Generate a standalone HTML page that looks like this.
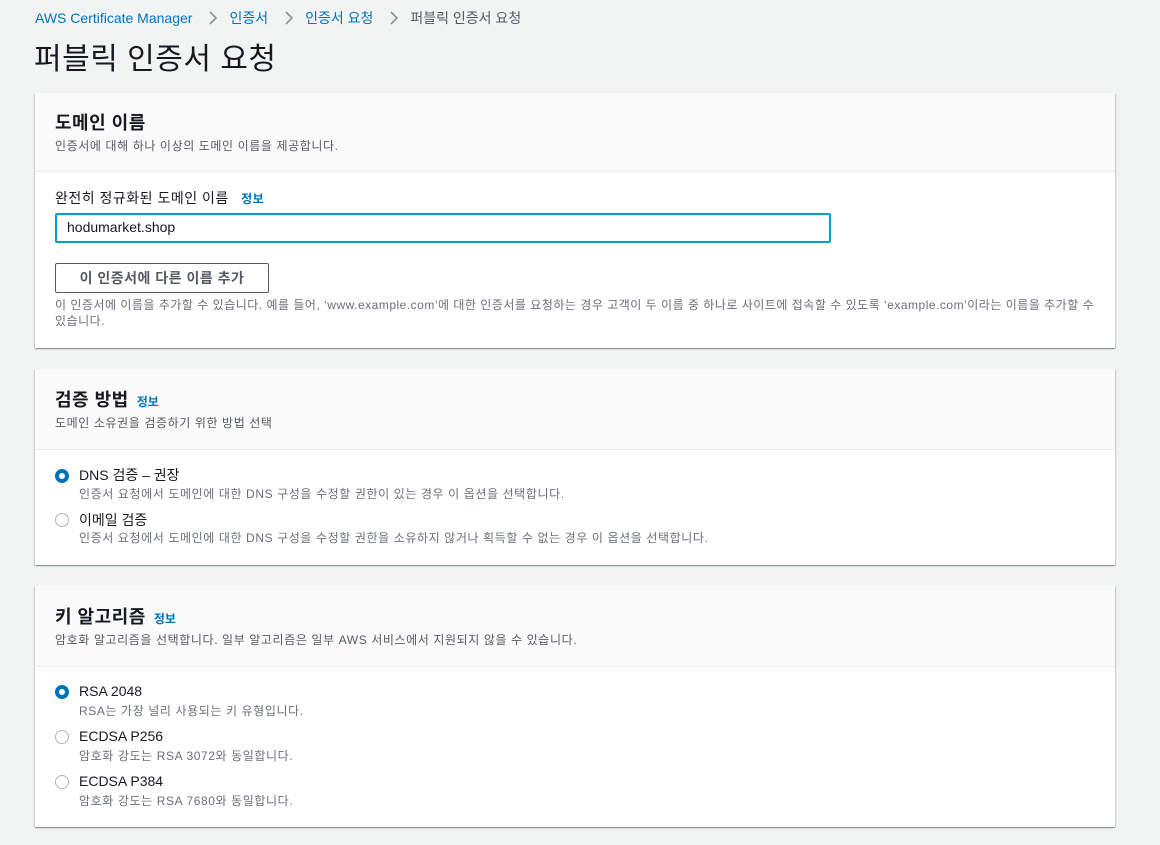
<!DOCTYPE html>
<html><head><meta charset="utf-8"><style>
*{box-sizing:border-box;margin:0;padding:0}
body{width:1160px;height:845px;background:#f2f3f3;font-family:"Liberation Sans","Noto Sans CJK KR",sans-serif;color:#16191f;position:relative;overflow:hidden}
.a{position:absolute;white-space:nowrap}
.bc{top:8px;left:35px;font-size:14px;color:#545b64}
.bc a{color:#0073bb;text-decoration:none}
.bc .s{display:inline-block;margin:0 11px 0 16px;vertical-align:-2px}
h1{position:absolute;top:34px;left:34px;font-size:30px;font-weight:400;letter-spacing:0.5px}
.card{position:absolute;left:35px;width:1080px;background:#fff;box-shadow:0 1px 1px 0 rgba(0,28,36,.3),1px 1px 1px 0 rgba(0,28,36,.15),-1px 1px 1px 0 rgba(0,28,36,.15)}
.hd{background:#fafafa;border-bottom:1px solid #eaeded;padding:0 20px;position:relative}
.hd h2{font-size:18px;font-weight:700;position:absolute;left:20px;letter-spacing:0.5px}
.hd h2 span{font-size:12px;color:#0073bb;font-weight:700;margin-left:8px;letter-spacing:0}
.hd p{font-size:12px;color:#545b64;position:absolute;left:20px;letter-spacing:0.6px}
.rad{position:absolute;left:20px;width:14px;height:14px;border-radius:50%;border:1px solid #aab7b8}
.rad.on{border:4px solid #0073bb}
.rl{position:absolute;left:44px;font-size:14px}
.rd{position:absolute;left:44px;font-size:12px;color:#687078;letter-spacing:0.6px}
</style></head><body>
<div class="a bc"><a>AWS Certificate Manager</a><svg class="s" width="10" height="14" viewBox="0 0 10 14"><path d="M2 1l6 6-6 6" fill="none" stroke="#879596" stroke-width="1.6"/></svg><a>인증서</a><svg class="s" width="10" height="14" viewBox="0 0 10 14"><path d="M2 1l6 6-6 6" fill="none" stroke="#879596" stroke-width="1.6"/></svg><a>인증서 요청</a><svg class="s" width="10" height="14" viewBox="0 0 10 14"><path d="M2 1l6 6-6 6" fill="none" stroke="#879596" stroke-width="1.6"/></svg>퍼블릭 인증서 요청</div>
<h1>퍼블릭 인증서 요청</h1>

<div class="card" style="top:93px;height:255px">
<div class="hd" style="height:79px"><h2 style="top:16px">도메인 이름</h2><p style="top:44px">인증서에 대해 하나 이상의 도메인 이름을 제공합니다.</p></div>
<div class="a" style="left:20px;top:95px;font-size:14px;letter-spacing:0.5px">완전히 정규화된 도메인 이름 <span style="color:#0073bb;font-size:12px;font-weight:700;margin-left:8px">정보</span></div>
<div class="a" style="left:20px;top:120px;width:776px;height:30px;border:2px solid #00a1c9;border-radius:2px;padding:4px 10px;font-size:14px">hodumarket.shop</div>
<div class="a" style="left:20px;top:170px;width:214px;height:30px;border:1px solid #545b64;border-radius:2px;font-size:14px;font-weight:700;color:#545b64;text-align:center;line-height:28px;letter-spacing:0.5px">이 인증서에 다른 이름 추가</div>
<div class="a" style="left:20px;top:204px;font-size:12px;color:#687078;line-height:16px;white-space:normal;width:1045px;letter-spacing:0.5px">이 인증서에 이름을 추가할 수 있습니다. 예를 들어, ‘www.example.com’에 대한 인증서를 요청하는 경우 고객이 두 이름 중 하나로 사이트에 접속할 수 있도록 ‘example.com’이라는 이름을 추가할 수 있습니다.</div>
</div>

<div class="card" style="top:369px;height:196px">
<div class="hd" style="height:81px"><h2 style="top:17px">검증 방법<span>정보</span></h2><p style="top:45px">도메인 소유권을 검증하기 위한 방법 선택</p></div>
<div class="rad on" style="top:100px"></div><div class="rl" style="top:96px">DNS 검증 – 권장</div><div class="rd" style="top:116px">인증서 요청에서 도메인에 대한 DNS 구성을 수정할 권한이 있는 경우 이 옵션을 선택합니다.</div>
<div class="rad" style="top:144px"></div><div class="rl" style="top:141px">이메일 검증</div><div class="rd" style="top:160px">인증서 요청에서 도메인에 대한 DNS 구성을 수정할 권한을 소유하지 않거나 획득할 수 없는 경우 이 옵션을 선택합니다.</div>
</div>

<div class="card" style="top:586px;height:241px">
<div class="hd" style="height:81px"><h2 style="top:17px">키 알고리즘<span>정보</span></h2><p style="top:45px">암호화 알고리즘을 선택합니다. 일부 알고리즘은 일부 AWS 서비스에서 지원되지 않을 수 있습니다.</p></div>
<div class="rad on" style="top:99px"></div><div class="rl" style="top:97px">RSA 2048</div><div class="rd" style="top:116px">RSA는 가장 널리 사용되는 키 유형입니다.</div>
<div class="rad" style="top:144px"></div><div class="rl" style="top:142px">ECDSA P256</div><div class="rd" style="top:161px">암호화 강도는 RSA 3072와 동일합니다.</div>
<div class="rad" style="top:189px"></div><div class="rl" style="top:187px">ECDSA P384</div><div class="rd" style="top:206px">암호화 강도는 RSA 7680와 동일합니다.</div>
</div>
</body></html>
